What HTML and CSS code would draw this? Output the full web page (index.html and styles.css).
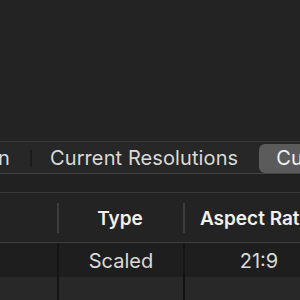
FILE: index.html
```html
<!DOCTYPE html>
<html lang="en">
<head>
    <meta charset="UTF-8">
    <title>Resolutions</title>
    <link rel="stylesheet" href="styles.css">
</head>
<body>
    <div class="window">
        <div class="top-area"></div>

        <div class="tab-bar">
            <div class="tab first">Display Resolution</div>
            <div class="tab">Current Resolutions</div>
            <div class="tab active">Custom Resolutions</div>
        </div>

        <div class="gap"></div>

        <div class="table">
            <div class="row head">
                <div class="cell"></div>
                <div class="cell">Type</div>
                <div class="cell">Aspect Ratio</div>
            </div>
            <div class="row odd">
                <div class="cell"></div>
                <div class="cell">Scaled</div>
                <div class="cell">21:9</div>
            </div>
            <div class="row even">
                <div class="cell"></div>
                <div class="cell"></div>
                <div class="cell"></div>
            </div>
        </div>
    </div>
</body>
</html>
```

FILE: styles.css
```css
* {
    margin: 0;
    padding: 0;
    box-sizing: border-box;
}

body {
    background-color: #232323;
    font-family: 'Inter', 'Liberation Sans', sans-serif;
    color: #dcdcdc;
    width: 300px;
    height: 300px;
    overflow: hidden;
}

.window {
    width: 300px;
    overflow: hidden;
}

.top-area {
    height: 141px;
}

/* segmented tabs */
.tab-bar {
    display: flex;
    align-items: center;
    height: 33px;
    border-top: 1px solid #383838;
    border-bottom: 1px solid #434343;
    background-color: #272727;
    padding: 1px 0 0;
    white-space: nowrap;
}

.tab {
    position: relative;
    font-size: 20px;
    letter-spacing: 0.1px;
    padding: 0 19px 0 20px;
    height: 29px;
    line-height: 29px;
    color: #dadada;
    flex-shrink: 0;
}

/* first tab is cut by the left edge, only its end shows */
.tab.first {
    display: flex;
    justify-content: flex-end;
    width: 30px;
    padding: 0 20px 0 0;
}

.tab + .tab::before {
    content: "";
    position: absolute;
    left: 0;
    top: 6px;
    height: 17px;
    width: 2px;
    background-color: #1b1b1b;
}

.tab.active {
    background-color: #5b5b5b;
    border-radius: 6px;
    margin-left: 2px;
    padding-left: 17px;
    color: #f2f2f2;
}

.tab.active::before {
    display: none;
}

.gap {
    height: 18px;
    background-color: #212121;
}

/* table */
.table {
    border-top: 1px solid #3a3a3a;
}

.row {
    display: grid;
    grid-template-columns: 57px 126px 150px;
    white-space: nowrap;
}

.cell {
    text-align: center;
    font-size: 19px;
    position: relative;
}

.row.head {
    height: 50px;
    border-bottom: 1px solid #3f3f3f;
    background-color: #232323;
}

.row.head .cell {
    font-weight: 600;
    color: #f0f0f0;
    line-height: 52px;
}

.row.head .cell + .cell::before {
    content: "";
    position: absolute;
    left: 0;
    top: 10px;
    height: 30px;
    width: 2px;
    background-color: #3c3c3c;
}

.row.odd {
    height: 34px;
    background-color: #1e1e1e;
}

.row.even {
    height: 30px;
    background-color: #282828;
}

.row.odd .cell,
.row.even .cell {
    font-size: 20px;
    line-height: 36px;
    color: #dadada;
}

.row.odd .cell + .cell,
.row.even .cell + .cell {
    border-left: 2px solid #141414;
}
```
